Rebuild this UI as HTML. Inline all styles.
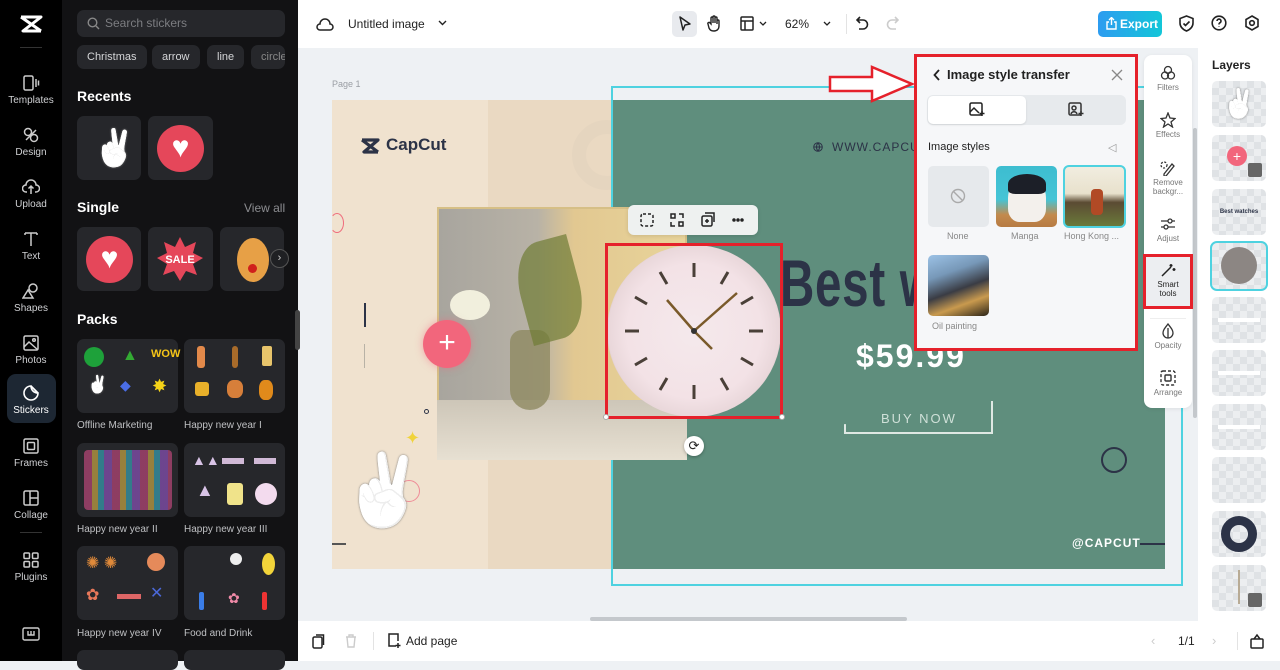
<!DOCTYPE html>
<html><head><meta charset="utf-8"><style>
*{box-sizing:border-box;margin:0;padding:0}
body{width:1280px;height:661px;overflow:hidden;font-family:"Liberation Sans",sans-serif;background:#eef1f4;position:relative}
.abs{position:absolute}
#nav{left:0;top:0;width:62px;height:661px;background:#000}
.ni{position:absolute;left:0;width:62px;text-align:center;color:#cfd0d3;font-size:10px}
.ni svg{display:block;margin:0 auto 3px}
#panel{left:62px;top:0;width:236px;height:661px;background:#121214}
.tile{position:absolute;background:#26272b;border-radius:7px}
.chip{position:absolute;top:45px;height:24px;background:#26272b;border-radius:7px;color:#d5d6d8;font-size:11px;line-height:24px;padding:0 10px}
.h{position:absolute;color:#fff;font-weight:bold;font-size:14px}
.cap{position:absolute;color:#bfc0c3;font-size:10px}
#top{left:298px;top:0;width:982px;height:48px;background:#fff}
#bot{left:298px;top:621px;width:982px;height:40px;background:#fff}
#layers{left:1198px;top:48px;width:82px;height:573px;background:#fff}
.ly{position:absolute;left:14px;width:54px;height:46px;border-radius:5px;background:#eceef0;
background-image:linear-gradient(45deg,#dfe2e5 25%,transparent 25%,transparent 75%,#dfe2e5 75%),linear-gradient(45deg,#dfe2e5 25%,transparent 25%,transparent 75%,#dfe2e5 75%);background-size:14px 14px;background-position:0 0,7px 7px;overflow:hidden}
.tool{position:absolute;left:0;width:48px;text-align:center;font-size:8px;color:#777}
.tool svg{display:block;margin:0 auto 2px}
.wh{filter:grayscale(1) brightness(2.2) drop-shadow(0 0 1px #777)}
</style></head><body>

<div id="nav" class="abs">
 <svg class="abs" style="left:18px;top:14px" width="26" height="20" viewBox="0 0 26 20"><path d="M3 3h20L5 17h18M3 3l20 14M5 17" stroke="#fff" stroke-width="3" fill="none" stroke-linejoin="round"/></svg>
 <div class="abs" style="left:20px;top:47px;width:22px;height:1px;background:#333"></div>
 <div class="ni" style="top:74px"><svg width="18" height="18" viewBox="0 0 18 18" fill="none" stroke="#ccc" stroke-width="1.5"><rect x="2" y="2" width="9" height="14" rx="1.5"/><path d="M14 5v8M16.5 6.5v5"/></svg>Templates</div>
 <div class="ni" style="top:126px"><svg width="18" height="18" viewBox="0 0 18 18" fill="none" stroke="#ccc" stroke-width="1.5"><circle cx="6" cy="6" r="3.5"/><circle cx="12" cy="12" r="3.5"/><path d="M4 14L14 4"/></svg>Design</div>
 <div class="ni" style="top:178px"><svg width="18" height="18" viewBox="0 0 18 18" fill="none" stroke="#ccc" stroke-width="1.5"><path d="M5 14H4a3.5 3.5 0 0 1 0-7 5 5 0 0 1 10 0 3.5 3.5 0 0 1 0 7h-1M9 8v8M6.5 10.5L9 8l2.5 2.5"/></svg>Upload</div>
 <div class="ni" style="top:230px"><svg width="18" height="18" viewBox="0 0 18 18" fill="none" stroke="#ccc" stroke-width="1.5"><path d="M3 3h12M9 3v13M3 3v2M15 3v2"/></svg>Text</div>
 <div class="ni" style="top:282px"><svg width="18" height="18" viewBox="0 0 18 18" fill="none" stroke="#ccc" stroke-width="1.5"><circle cx="11" cy="6" r="4"/><path d="M6 8l5 8H1z"/></svg>Shapes</div>
 <div class="ni" style="top:334px"><svg width="18" height="18" viewBox="0 0 18 18" fill="none" stroke="#ccc" stroke-width="1.5"><rect x="2" y="2" width="14" height="14" rx="1.5"/><path d="M2 13l5-5 9 8"/><circle cx="12" cy="6" r="1.3"/></svg>Photos</div>
 <div class="abs" style="left:7px;top:374px;width:49px;height:49px;border-radius:9px;background:#1d2733"></div>
 <div class="ni" style="top:384px;color:#fff"><svg width="18" height="18" viewBox="0 0 18 18" fill="none" stroke="#fff" stroke-width="1.6"><path d="M16 9A7 7 0 1 1 9 2c0 4 3 7 7 7zM9 2l7 7"/></svg>Stickers</div>
 <div class="ni" style="top:437px"><svg width="18" height="18" viewBox="0 0 18 18" fill="none" stroke="#ccc" stroke-width="1.5"><rect x="2" y="2" width="14" height="14" rx="1.5"/><rect x="5.5" y="5.5" width="7" height="7" rx="1"/></svg>Frames</div>
 <div class="ni" style="top:489px"><svg width="18" height="18" viewBox="0 0 18 18" fill="none" stroke="#ccc" stroke-width="1.5"><rect x="2" y="2" width="14" height="14" rx="1.5"/><path d="M8 2v14M8 9h8"/></svg>Collage</div>
 <div class="abs" style="left:20px;top:532px;width:22px;height:1px;background:#333"></div>
 <div class="ni" style="top:551px"><svg width="18" height="18" viewBox="0 0 18 18" fill="none" stroke="#ccc" stroke-width="1.5"><rect x="2" y="2" width="5.5" height="5.5" rx="1"/><rect x="10.5" y="2" width="5.5" height="5.5" rx="1"/><rect x="2" y="10.5" width="5.5" height="5.5" rx="1"/><rect x="10.5" y="10.5" width="5.5" height="5.5" rx="1"/></svg>Plugins</div>
 <svg class="abs" style="left:22px;top:627px" width="18" height="14" viewBox="0 0 18 14" fill="none" stroke="#ccc" stroke-width="1.4"><rect x="1" y="1" width="16" height="12" rx="1.5"/><path d="M6 4v4h6V4M9 4v4"/></svg>
</div>

<div id="panel" class="abs">
 <div class="abs" style="left:15px;top:10px;width:208px;height:27px;background:#26272b;border-radius:7px"></div>
 <svg class="abs" style="left:25px;top:17px" width="13" height="13" viewBox="0 0 13 13" fill="none" stroke="#888" stroke-width="1.4"><circle cx="5.5" cy="5.5" r="4.3"/><path d="M9 9l3 3"/></svg>
 <div class="abs" style="left:43px;top:16px;color:#7c7d81;font-size:12px">Search stickers</div>
 <div class="chip" style="left:15px">Christmas</div>
 <div class="chip" style="left:90px">arrow</div>
 <div class="chip" style="left:145px">line</div>
 <div class="chip" style="left:189px;width:34px;overflow:hidden;color:#888">circle</div>
 <div class="h" style="left:15px;top:88px">Recents</div>
 <div class="tile" style="left:15px;top:116px;width:64px;height:64px"></div>
 <div class="abs wh" style="left:30px;top:124px;font-size:36px;line-height:48px">✌</div>
 <div class="tile" style="left:86px;top:116px;width:65px;height:64px"></div>
 <div class="abs" style="left:95px;top:125px;width:47px;height:47px;border-radius:50%;background:#e5475a;color:#fff;font-size:30px;text-align:center;line-height:46px">♥</div>
 <div class="h" style="left:15px;top:199px">Single</div>
 <div class="abs" style="left:182px;top:201px;color:#8c8d91;font-size:12px">View all</div>
 <div class="tile" style="left:15px;top:227px;width:64px;height:64px"></div>
 <div class="abs" style="left:24px;top:236px;width:47px;height:47px;border-radius:50%;background:#e5475a;color:#fff;font-size:30px;text-align:center;line-height:46px">♥</div>
 <div class="tile" style="left:86px;top:227px;width:65px;height:64px"></div>
 <svg class="abs" style="left:94px;top:235px" width="48" height="48" viewBox="0 0 48 48"><polygon points="24,2 29,12 40,7 37,18 47,23 37,29 41,40 30,36 24,46 18,36 7,40 11,29 1,23 11,18 8,7 19,12" fill="#e5475a"/><text x="24" y="28" font-size="11" font-weight="bold" fill="#fff" text-anchor="middle" font-family="Liberation Sans">SALE</text></svg>
 <div class="tile" style="left:158px;top:227px;width:64px;height:64px"></div>
 <div class="abs" style="left:175px;top:238px;width:32px;height:44px;border-radius:50%;background:#e7a046"></div>
 <div class="abs" style="left:186px;top:264px;width:9px;height:9px;border-radius:50%;background:#d0201c"></div>
 <div class="abs" style="left:208px;top:249px;width:19px;height:19px;border-radius:50%;background:#1f2023;border:1px solid #555;color:#ccc;font-size:11px;text-align:center;line-height:17px">›</div>
 <div class="h" style="left:15px;top:311px">Packs</div>
 <div class="tile" style="left:15px;top:339px;width:101px;height:74px"></div>
 <div class="tile" style="left:122px;top:339px;width:101px;height:74px"></div>
 <div class="cap" style="left:15px;top:420px">Offline Marketing</div>
 <div class="cap" style="left:122px;top:420px">Happy new year I</div>
 <div class="tile" style="left:15px;top:443px;width:101px;height:74px"></div>
 <div class="tile" style="left:122px;top:443px;width:101px;height:74px"></div>
 <div class="cap" style="left:15px;top:524px">Happy new year II</div>
 <div class="cap" style="left:122px;top:524px">Happy new year III</div>
 <div class="tile" style="left:15px;top:546px;width:101px;height:74px"></div>
 <div class="tile" style="left:122px;top:546px;width:101px;height:74px"></div>
 <div class="cap" style="left:15px;top:628px">Happy new year IV</div>
 <div class="cap" style="left:122px;top:628px">Food and Drink</div>
 <div class="tile" style="left:15px;top:650px;width:101px;height:20px"></div>
 <div class="tile" style="left:122px;top:650px;width:101px;height:20px"></div>
 <div class="abs" style="left:22px;top:347px;width:20px;height:20px;border-radius:50%;background:#1ea13a"></div>
 <div class="abs" style="left:60px;top:347px;color:#3a3;font-size:16px">▲</div>
 <div class="abs" style="left:89px;top:348px;color:#f5c518;font-size:11px;font-weight:bold">WOW</div>
 <div class="abs wh" style="left:25px;top:375px;font-size:17px">✌</div>
 <div class="abs" style="left:58px;top:377px;color:#4a6de5;font-size:14px">◆</div>
 <div class="abs" style="left:90px;top:376px;color:#f5d318;font-size:18px">✸</div>
 <div class="abs" style="left:135px;top:346px;width:8px;height:22px;background:#e2894a;border-radius:3px"></div>
 <div class="abs" style="left:170px;top:346px;width:6px;height:22px;background:#a86b2a;border-radius:3px"></div>
 <div class="abs" style="left:200px;top:346px;width:10px;height:20px;background:#e7c46b;border-radius:2px"></div>
 <div class="abs" style="left:133px;top:382px;width:14px;height:14px;background:#e8b02a;border-radius:3px"></div>
 <div class="abs" style="left:165px;top:380px;width:16px;height:18px;background:#d77f3a;border-radius:40%"></div>
 <div class="abs" style="left:197px;top:380px;width:14px;height:20px;background:#e08a1b;border-radius:40%"></div>
 <div class="abs" style="left:22px;top:450px;width:88px;height:60px;background:repeating-linear-gradient(90deg,#e24f8e 0 8px,#f2c94c 8px 14px,#3cc1d8 14px 20px,#a75de0 20px 28px);opacity:.55;border-radius:4px"></div>
 <div class="abs" style="left:130px;top:452px;color:#d8c3e6;font-size:14px">▲▲</div>
 <div class="abs" style="left:160px;top:458px;width:22px;height:6px;background:#d0b9d6"></div>
 <div class="abs" style="left:192px;top:458px;width:22px;height:6px;background:#d0b9d6"></div>
 <div class="abs" style="left:134px;top:480px;color:#d8c3e6;font-size:18px">▲</div>
 <div class="abs" style="left:165px;top:483px;width:16px;height:22px;background:#f0e38a;border-radius:3px"></div>
 <div class="abs" style="left:193px;top:483px;width:22px;height:22px;background:#f3dbee;border-radius:50%"></div>
 <div class="abs" style="left:24px;top:553px;color:#e08a3a;font-size:16px">✺ ✺</div>
 <div class="abs" style="left:85px;top:553px;width:18px;height:18px;background:#e58a5a;border-radius:50%"></div>
 <div class="abs" style="left:24px;top:585px;color:#e8785a;font-size:16px">✿</div>
 <div class="abs" style="left:55px;top:594px;width:24px;height:5px;background:#d66"></div>
 <div class="abs" style="left:88px;top:583px;color:#4b68d8;font-size:16px">✕</div>
 <div class="abs" style="left:200px;top:553px;width:13px;height:22px;background:#f2d43a;border-radius:50%"></div>
 <div class="abs" style="left:168px;top:553px;width:12px;height:12px;background:#eee;border-radius:50%"></div>
 <div class="abs" style="left:137px;top:592px;width:5px;height:18px;background:#3a7de8;border-radius:2px"></div>
 <div class="abs" style="left:166px;top:590px;color:#f08aa8;font-size:14px">✿</div>
 <div class="abs" style="left:200px;top:592px;width:5px;height:18px;background:#e33;border-radius:2px"></div>
 <div class="abs" style="left:233px;top:310px;width:5px;height:40px;background:#444;border-radius:3px"></div>
</div>

<div id="top" class="abs">
 <svg class="abs" style="left:18px;top:16px" width="18" height="16" viewBox="0 0 18 16" fill="none" stroke="#222" stroke-width="1.5"><path d="M5 14H4a3 3 0 0 1 0-6 5 5 0 0 1 10 0 3 3 0 0 1 0 6z"/></svg>
 <div class="abs" style="left:50px;top:17px;font-size:12px;color:#222">Untitled image</div>
 <svg class="abs" style="left:140px;top:20px" width="9" height="6" viewBox="0 0 9 6"><path d="M1 1l3.5 3.5L8 1" stroke="#222" stroke-width="1.4" fill="none"/></svg>
 <div class="abs" style="left:374px;top:11px;width:25px;height:26px;background:#e8eaee;border-radius:5px"></div>
 <svg class="abs" style="left:380px;top:16px" width="14" height="16" viewBox="0 0 14 16"><path d="M2 1l10 7-5 1-2 5z" stroke="#222" stroke-width="1.5" fill="none" stroke-linejoin="round"/></svg>
 <svg class="abs" style="left:409px;top:15px" width="14" height="17" viewBox="0 0 14 17" fill="none" stroke="#222" stroke-width="1.4"><path d="M4 9V3a1 1 0 0 1 2 0v5V2a1 1 0 0 1 2 0v6V3a1 1 0 0 1 2 0v6-3a1 1 0 0 1 2 0v5c0 3-2 5-5 5s-4-1-5-3L1 9a1 1 0 0 1 2-1z"/></svg>
 <svg class="abs" style="left:442px;top:16px" width="14" height="15" viewBox="0 0 14 15" fill="none" stroke="#222" stroke-width="1.5"><rect x="1" y="1" width="12" height="13" rx="1"/><path d="M1 5h12M5 5v9"/></svg>
 <svg class="abs" style="left:461px;top:21px" width="8" height="5" viewBox="0 0 8 5"><path d="M1 1l3 3 3-3" stroke="#222" stroke-width="1.3" fill="none"/></svg>
 <div class="abs" style="left:487px;top:17px;font-size:12px;color:#222">62%</div>
 <svg class="abs" style="left:525px;top:21px" width="8" height="5" viewBox="0 0 8 5"><path d="M1 1l3 3 3-3" stroke="#222" stroke-width="1.3" fill="none"/></svg>
 <div class="abs" style="left:548px;top:14px;width:1px;height:20px;background:#e3e3e3"></div>
 <svg class="abs" style="left:558px;top:16px" width="13" height="15" viewBox="0 0 13 15" fill="none" stroke="#222" stroke-width="1.6"><path d="M4 1L1 4l3 3M1 4h6a4.5 4.5 0 0 1 0 9H3"/></svg>
 <svg class="abs" style="left:588px;top:16px" width="13" height="15" viewBox="0 0 13 15" fill="none" stroke="#ccc" stroke-width="1.6"><path d="M9 1l3 3-3 3M12 4H6a4.5 4.5 0 0 0 0 9h4"/></svg>
 <div class="abs" style="left:800px;top:11px;width:64px;height:26px;background:linear-gradient(90deg,#2d9cf0,#13c6d8);border-radius:5px;color:#fff;font-size:12px;line-height:26px;padding-left:22px;font-weight:bold">Export</div>
 <svg class="abs" style="left:808px;top:17px" width="11" height="13" viewBox="0 0 11 13" fill="none" stroke="#fff" stroke-width="1.4"><path d="M3 5H1v7h9V5H8M5.5 8V1M3 3l2.5-2.5L8 3"/></svg>
 <svg class="abs" style="left:881px;top:15px" width="15" height="17" viewBox="0 0 15 17" fill="none" stroke="#222" stroke-width="1.6"><path d="M7.5 1L1 3.5V8c0 4 3 6.5 6.5 8 3.5-1.5 6.5-4 6.5-8V3.5z"/><path d="M4.5 8.5l2 2 4-4"/></svg>
 <svg class="abs" style="left:913px;top:15px" width="16" height="16" viewBox="0 0 16 16" fill="none" stroke="#222" stroke-width="1.6"><circle cx="8" cy="8" r="6.8"/><path d="M6 6a2 2 0 1 1 2.5 2c-.5.3-.5.7-.5 1.5M8 11.5v.5"/></svg>
 <svg class="abs" style="left:946px;top:15px" width="16" height="16" viewBox="0 0 16 16" fill="none" stroke="#222" stroke-width="1.6"><path d="M8 1l6 3.5v7L8 15l-6-3.5v-7z"/><circle cx="8" cy="8" r="2.3"/></svg>
</div>

<!-- canvas -->
<div class="abs" style="left:332px;top:79px;font-size:9px;color:#9a9ea4">Page 1</div>
<div class="abs" style="left:332px;top:100px;width:280px;height:469px;background:#f0e2cf;overflow:hidden">
 <div class="abs" style="left:156px;top:0;width:124px;height:469px;background:#ead9c2"></div>
 <div class="abs" style="left:240px;top:20px;width:70px;height:70px;border:14px solid #e5d5bf;border-radius:50%"></div>
</div>
<div class="abs" style="left:611px;top:100px;width:554px;height:469px;background:#5f8e7d"></div>
<div class="abs" style="left:611px;top:86px;width:572px;height:500px;border:2px solid #4ed2e0"></div>
<svg class="abs" style="left:359px;top:137px" width="22" height="18" viewBox="0 0 22 18"><path d="M3 3h16L5 15h14M3 3l16 12" stroke="#2c3347" stroke-width="3.2" fill="none" stroke-linejoin="round"/></svg>
<div class="abs" style="left:386px;top:135px;font-size:17px;font-weight:bold;color:#2c3347">CapCut</div>
<svg class="abs" style="left:813px;top:142px" width="10" height="10" viewBox="0 0 10 10" fill="none" stroke="#2c3347" stroke-width="1"><circle cx="5" cy="5" r="4.3"/><path d="M1 5h8M5 1c-2 2-2 6 0 8M5 1c2 2 2 6 0 8"/></svg>
<div class="abs" style="left:832px;top:140px;font-size:12px;color:#2c3347;letter-spacing:1px">WWW.CAPCU</div>
<div class="abs" style="left:780px;top:245px;font-size:66px;font-weight:bold;color:#2c3347;transform:scaleX(.72);transform-origin:left;letter-spacing:1px">Best wa</div>
<div class="abs" style="left:856px;top:338px;font-size:32px;font-weight:bold;color:#fff;letter-spacing:2px">$59.99</div>
<div class="abs" style="left:881px;top:411px;font-size:13px;color:#cfe0d8;letter-spacing:2px">BUY NOW</div>
<div class="abs" style="left:844px;top:401px;width:149px;height:33px;border-right:2px solid #dfe8e3;border-bottom:2px solid #dfe8e3;border-left:2px solid #dfe8e3;clip-path:polygon(0 70%,0 100%,100% 100%,100% 0,98% 0,98% 90%,2% 90%,2% 70%)"></div>
<div class="abs" style="left:1072px;top:536px;font-size:12px;font-weight:bold;color:#fff;letter-spacing:1px">@CAPCUT</div>
<div class="abs" style="left:1140px;top:543px;width:25px;height:2px;background:#2c3347"></div>
<div class="abs" style="left:1101px;top:447px;width:26px;height:26px;border:2px solid #2c3347;border-radius:50%"></div>
<!-- photo -->
<div class="abs" style="left:437px;top:207px;width:250px;height:253px;background:linear-gradient(90deg,#a8a59e 0,#b8b2a6 40%,#e2c891 55%,#e8d49a 100%);border:2px solid #d6bf86"></div>
<div class="abs" style="left:437px;top:400px;width:250px;height:60px;background:linear-gradient(#cdc6b8,#e7e0d2)"></div>
<div class="abs" style="left:510px;top:330px;width:40px;height:80px;background:#8f8a62;border-radius:12px 12px 20px 20px;opacity:.8"></div>
<div class="abs" style="left:520px;top:240px;width:60px;height:100px;background:#6f7c35;border-radius:50% 0 50% 0;opacity:.7;transform:rotate(-15deg)"></div>
<div class="abs" style="left:450px;top:290px;width:40px;height:30px;background:#f1efdd;border-radius:50%"></div>
<!-- clock -->
<div class="abs" style="left:607px;top:245px;width:174px;height:172px;border-radius:50%;background:radial-gradient(circle,#f4e9ec 0,#f3e2e6 55%,#e9d7da 70%,#c9b9bb 74%,#efe4e6 78%,#d9cbcd 100%)"></div>
<svg class="abs" style="left:607px;top:245px" width="174" height="172" viewBox="0 0 174 172"><g stroke="#4a4038" stroke-width="3">
<path d="M87 18v14M87 140v14M18 86h14M142 86h14M121 27l-7 12M53 27l7 12M28 52l12 7M146 52l-12 7M28 120l12-7M146 120l-12-7M53 145l7-12M121 145l-7-12"/></g>
<path d="M87 86L130 48M87 86l18 18M87 86L60 55" stroke="#7a5a2a" stroke-width="2.5"/><circle cx="87" cy="86" r="3" fill="#333"/></svg>
<div class="abs" style="left:605px;top:243px;width:178px;height:176px;border:3px solid #e5212b"></div>
<div class="abs" style="left:603px;top:414px;width:6px;height:6px;background:#fff;border:1px solid #aaa;border-radius:50%"></div>
<div class="abs" style="left:779px;top:414px;width:6px;height:6px;background:#fff;border:1px solid #aaa;border-radius:50%"></div>
<div class="abs" style="left:684px;top:436px;width:20px;height:20px;background:#fff;border-radius:50%;box-shadow:0 1px 3px rgba(0,0,0,.3);font-size:13px;text-align:center;line-height:20px;color:#222">⟳</div>
<div class="abs" style="left:628px;top:205px;width:130px;height:30px;background:#eef1f0;border-radius:6px;box-shadow:0 1px 4px rgba(0,0,0,.12)"></div>
<svg class="abs" style="left:640px;top:212px" width="110" height="16" viewBox="0 0 110 16" fill="none" stroke="#222" stroke-width="1.5"><rect x="1" y="2" width="12" height="12" rx="2" stroke-dasharray="3 2"/><rect x="31" y="2" width="4" height="4"/><rect x="39" y="10" width="4" height="4"/><path d="M39 2h4v4M31 10v4h4"/><rect x="62" y="4" width="10" height="10" rx="1.5"/><path d="M65 1h9v9M67 7v4M65 9h4"/><circle cx="94" cy="8" r="1" fill="#222"/><circle cx="98" cy="8" r="1" fill="#222"/><circle cx="102" cy="8" r="1" fill="#222"/></svg>
<div class="abs" style="left:423px;top:320px;width:48px;height:48px;border-radius:50%;background:#f2667c;box-shadow:0 0 8px rgba(242,102,124,.5);color:#fff;font-size:30px;text-align:center;line-height:46px">+</div>
<div class="abs" style="left:330px;top:213px;width:14px;height:20px;border:1.5px solid #ef6b7c;border-radius:50%;border-left-color:transparent"></div>
<div class="abs" style="left:364px;top:303px;width:1.5px;height:24px;background:#2c3347"></div>
<div class="abs" style="left:364px;top:344px;width:1px;height:24px;background:#b8b2a6"></div>
<div class="abs" style="left:424px;top:409px;width:5px;height:5px;border:1px solid #2c3347;border-radius:50%"></div>
<div class="abs" style="left:405px;top:428px;color:#f0d33b;font-size:18px">✦</div>
<div class="abs" style="left:398px;top:480px;width:22px;height:22px;border:1.5px solid #ef8b97;border-radius:50%"></div>
<div class="abs wh" style="left:340px;top:440px;font-size:70px;line-height:100px">✌</div>
<div class="abs" style="left:332px;top:543px;width:14px;height:1.5px;background:#555"></div>
<div class="abs" style="left:590px;top:617px;width:317px;height:4px;background:#c4c8cc;border-radius:2px"></div>
<div class="abs" style="left:1193px;top:128px;width:4px;height:290px;background:#c4c8cc;border-radius:2px"></div>

<svg class="abs" style="left:828px;top:64px" width="86" height="40" viewBox="0 0 86 40"><path d="M2 13h42V3l40 17-40 17V27H2z" fill="#fff" stroke="#e5212b" stroke-width="2.5"/></svg>

<div class="abs" style="left:914px;top:54px;width:224px;height:297px;background:#f6f7f9;border:3px solid #e5212b"></div>
<svg class="abs" style="left:933px;top:69px" width="8" height="12" viewBox="0 0 8 12"><path d="M6 1L1.5 6 6 11" stroke="#222" stroke-width="1.8" fill="none"/></svg>
<div class="abs" style="left:947px;top:67px;font-size:13px;font-weight:bold;color:#222">Image style transfer</div>
<svg class="abs" style="left:1111px;top:69px" width="12" height="12" viewBox="0 0 12 12"><path d="M1 1l10 10M11 1L1 11" stroke="#888" stroke-width="1.3"/></svg>
<div class="abs" style="left:927px;top:95px;width:199px;height:30px;background:#e7eaed;border-radius:6px"></div>
<div class="abs" style="left:928px;top:96px;width:98px;height:28px;background:#fff;border-radius:5px;box-shadow:0 1px 2px rgba(0,0,0,.1)"></div>
<svg class="abs" style="left:969px;top:102px" width="16" height="15" viewBox="0 0 16 15" fill="none" stroke="#222" stroke-width="1.5"><rect x="1" y="1" width="12" height="12" rx="1.5"/><path d="M1 10l4-4 5 5"/><path d="M13 9v5M10.5 11.5h5"/></svg>
<svg class="abs" style="left:1068px;top:102px" width="16" height="15" viewBox="0 0 16 15" fill="none" stroke="#333" stroke-width="1.5"><rect x="1" y="1" width="12" height="12" rx="1.5"/><circle cx="6" cy="6" r="2"/><path d="M3 12c1-3 5-3 6 0M13 9v5M10.5 11.5h5"/></svg>
<div class="abs" style="left:928px;top:141px;font-size:11px;color:#222">Image styles</div>
<div class="abs" style="left:1108px;top:141px;font-size:11px;color:#999">◁</div>
<div class="abs" style="left:928px;top:166px;width:61px;height:61px;background:#e6e9ec;border-radius:5px"></div>
<svg class="abs" style="left:950px;top:188px" width="16" height="16" viewBox="0 0 16 16" fill="none" stroke="#aaa" stroke-width="1.4"><circle cx="8" cy="8" r="6.5"/><path d="M3.5 3.5l9 9"/></svg>
<div class="abs" style="left:996px;top:166px;width:61px;height:61px;border-radius:5px;background:linear-gradient(#3dbdd0 0,#45c4d6 55%,#c38a4d 80%,#b77b43 100%);overflow:hidden">
 <div class="abs" style="left:12px;top:12px;width:38px;height:44px;background:#f3f0ec;border-radius:45% 45% 30% 30%"></div>
 <div class="abs" style="left:12px;top:8px;width:38px;height:20px;background:#1c1f28;border-radius:50% 50% 20% 20%"></div></div>
<div class="abs" style="left:1063px;top:165px;width:63px;height:63px;border:2px solid #4ed2e0;border-radius:6px;background:linear-gradient(#f1ede0 0,#e8e1cc 45%,#5b4b33 60%,#6a7a3a 100%)">
 <div class="abs" style="left:26px;top:22px;width:12px;height:26px;background:#b14a25;border-radius:4px"></div></div>
<div class="abs" style="left:947px;top:231px;font-size:9px;color:#888">None</div>
<div class="abs" style="left:1011px;top:231px;font-size:9px;color:#888">Manga</div>
<div class="abs" style="left:1064px;top:231px;font-size:9px;color:#888">Hong Kong ...</div>
<div class="abs" style="left:928px;top:255px;width:61px;height:61px;border-radius:5px;background:linear-gradient(160deg,#9cc2e6 0,#7798b8 30%,#3a3c44 55%,#c99a4e 75%,#2b2418 100%)"></div>
<div class="abs" style="left:932px;top:321px;font-size:9px;color:#888">Oil painting</div>

<div class="abs" style="left:1144px;top:55px;width:48px;height:353px;background:#fff;border-radius:8px;box-shadow:0 1px 4px rgba(0,0,0,.08)">
 <div class="tool" style="top:10px"><svg width="16" height="16" viewBox="0 0 16 16" fill="none" stroke="#333" stroke-width="1.3"><circle cx="8" cy="5" r="3.5"/><circle cx="5" cy="10.5" r="3.5"/><circle cx="11" cy="10.5" r="3.5"/></svg>Filters</div>
 <div class="tool" style="top:57px"><svg width="16" height="16" viewBox="0 0 16 16" fill="none" stroke="#333" stroke-width="1.3"><path d="M8 1l2 5 5 .5-4 3.5 1.5 5L8 12l-4.5 3L5 10 1 6.5 6 6z"/></svg>Effects</div>
 <div class="tool" style="top:105px"><svg width="16" height="16" viewBox="0 0 16 16" fill="none" stroke="#333" stroke-width="1.3"><path d="M4 14l8-10 2 2-8 10H4z"/><circle cx="4" cy="5" r="3" stroke-dasharray="2 1.5"/></svg>Remove<br>backgr...</div>
 <div class="tool" style="top:161px"><svg width="16" height="16" viewBox="0 0 16 16" fill="none" stroke="#333" stroke-width="1.3"><path d="M1 5h14M1 11h14"/><circle cx="10" cy="5" r="2" fill="#fff"/><circle cx="6" cy="11" r="2" fill="#fff"/></svg>Adjust</div>
 <div class="abs" style="left:0;top:201px;width:48px;height:52px;background:#eceef1"></div>
 <div class="tool" style="top:207px;color:#222"><svg width="16" height="16" viewBox="0 0 16 16" fill="none" stroke="#222" stroke-width="1.5"><path d="M2 14l9-9M11 2v3M9.5 3.5h3M14 6v3M12.5 7.5h3"/></svg>Smart<br>tools</div>
 <div class="abs" style="left:6px;top:263px;width:36px;height:1px;background:#eee"></div>
 <div class="tool" style="top:268px"><svg width="16" height="16" viewBox="0 0 16 16" fill="none" stroke="#333" stroke-width="1.3"><path d="M8 1c3 4 5 6 5 9a5 5 0 0 1-10 0c0-3 2-5 5-9z"/><path d="M8 5v10"/></svg>Opacity</div>
 <div class="tool" style="top:315px"><svg width="16" height="16" viewBox="0 0 16 16" fill="none" stroke="#333" stroke-width="1.4"><rect x="1" y="1" width="14" height="14" rx="2" stroke-dasharray="3 2"/><rect x="5" y="5" width="6" height="6" rx="1"/></svg>Arrange</div>
</div>
<div class="abs" style="left:1143px;top:254px;width:50px;height:55px;border:3px solid #e5212b"></div>

<div id="layers" class="abs">
 <div class="abs" style="left:14px;top:10px;font-size:12px;font-weight:bold;color:#222">Layers</div>
 <div class="ly" style="top:33px"><div class="wh" style="font-size:28px;text-align:center;line-height:46px">✌</div></div>
 <div class="ly" style="top:87px"><div class="abs" style="left:15px;top:11px;width:20px;height:20px;border-radius:50%;background:#f2667c;color:#fff;text-align:center;line-height:20px;font-size:14px">+</div><div class="abs" style="left:36px;top:28px;width:14px;height:14px;background:#666;border-radius:2px"></div></div>
 <div class="ly" style="top:141px"><div style="font-size:6px;color:#2c3347;text-align:center;line-height:46px;font-weight:bold">Best watches</div></div>
 <div class="ly" style="top:195px;outline:2px solid #4ed2e0"><div class="abs" style="left:9px;top:4px;width:36px;height:37px;border-radius:50%;background:#8c8683"></div></div>
 <div class="ly" style="top:249px"><div class="abs" style="left:6px;top:21px;width:42px;height:4px;background:#fff"></div></div>
 <div class="ly" style="top:302px"><div class="abs" style="left:6px;top:21px;width:42px;height:4px;background:#fff"></div></div>
 <div class="ly" style="top:356px"><div class="abs" style="left:6px;top:21px;width:42px;height:4px;background:#fff"></div></div>
 <div class="ly" style="top:409px"></div>
 <div class="ly" style="top:463px"><div class="abs" style="left:9px;top:5px;width:36px;height:36px;border:9px solid #2c3347;border-radius:50%"></div></div>
 <div class="ly" style="top:517px"><div class="abs" style="left:26px;top:5px;width:2px;height:34px;background:#b8ab95"></div><div class="abs" style="left:36px;top:28px;width:14px;height:14px;background:#666;border-radius:2px"></div></div>
</div>

<div id="bot" class="abs">
 <svg class="abs" style="left:14px;top:13px" width="13" height="15" viewBox="0 0 13 15" fill="none" stroke="#222" stroke-width="1.5"><rect x="1" y="3" width="9" height="11" rx="1.5"/><path d="M4 1h7.5v10"/></svg>
 <svg class="abs" style="left:47px;top:13px" width="12" height="14" viewBox="0 0 12 14" fill="none" stroke="#ccc" stroke-width="1.4"><path d="M1 3h10M4 3V1h4v2M2 3l1 10h6l1-10"/></svg>
 <div class="abs" style="left:75px;top:11px;width:1px;height:18px;background:#e3e3e3"></div>
 <svg class="abs" style="left:89px;top:12px" width="14" height="16" viewBox="0 0 14 16" fill="none" stroke="#222" stroke-width="1.5"><path d="M9 13H2V1h9v7M11 10v5M8.5 12.5h5"/></svg>
 <div class="abs" style="left:108px;top:13px;font-size:12px;color:#222">Add page</div>
 <div class="abs" style="left:853px;top:12px;font-size:13px;color:#ccc">‹</div>
 <div class="abs" style="left:880px;top:13px;font-size:12px;color:#222">1/1</div>
 <div class="abs" style="left:914px;top:12px;font-size:13px;color:#ccc">›</div>
 <div class="abs" style="left:939px;top:11px;width:1px;height:18px;background:#e3e3e3"></div>
 <svg class="abs" style="left:952px;top:12px" width="14" height="16" viewBox="0 0 14 16" fill="none" stroke="#222" stroke-width="1.5"><rect x="1" y="6" width="12" height="9" rx="1"/><path d="M4 6l3-4 3 4"/></svg>
</div>
</body></html>
